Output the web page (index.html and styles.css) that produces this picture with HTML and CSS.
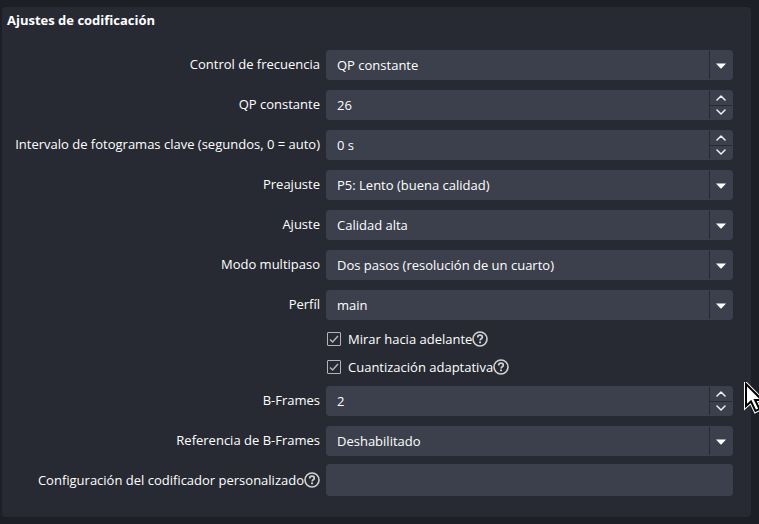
FILE: index.html
```html
<!DOCTYPE html>
<html lang="es">
<head>
    <meta charset="UTF-8">
    <meta name="viewport" content="width=device-width, initial-scale=1.0">
    <title>Ajustes de codificación</title>
    <link rel="stylesheet" href="styles.css">
</head>
<body>
    <!-- Iconos compartidos -->
    <svg class="sprite" aria-hidden="true">
        <symbol id="icon-arrow" viewBox="0 0 10 6">
            <path d="M0 0.500h10L5.600 5.200q-.6.6-1.200 0z" fill="#fff"/>
        </symbol>
        <symbol id="icon-up" viewBox="0 0 10 6">
            <path d="M1 5l4-4 4 4" fill="none" stroke="#f0f0f2" stroke-width="1.5" stroke-linecap="round" stroke-linejoin="round"/>
        </symbol>
        <symbol id="icon-down" viewBox="0 0 10 6">
            <path d="M1 1l4 4 4-4" fill="none" stroke="#f0f0f2" stroke-width="1.5" stroke-linecap="round" stroke-linejoin="round"/>
        </symbol>
        <symbol id="icon-help" viewBox="0 0 16 16">
            <circle cx="8" cy="8" r="7" fill="none" stroke="#d2d2d4" stroke-width="1.6"/>
            <path d="M5.700 6.400c0-1.400 1-2.200 2.300-2.200s2.300.8 2.300 2c0 1.600-2.200 1.600-2.200 3.300" fill="none" stroke="#d2d2d4" stroke-width="1.7"/>
            <path d="M7.100 10.500h1.900v1.800H7.100z" fill="#d2d2d4"/>
        </symbol>
    </svg>

    <main class="panel">
        <h1>Ajustes de codificación</h1>
        <form class="settings">
            <label for="rate-control">Control de frecuencia</label>
            <div class="field">
                <select id="rate-control"><option>QP constante</option></select>
                <svg class="arrow"><use href="#icon-arrow"/></svg>
            </div>

            <label for="cqp">QP constante</label>
            <div class="field spin">
                <input type="text" id="cqp" value="26">
                <div class="steps">
                    <button type="button" aria-label="Aumentar"><svg><use href="#icon-up"/></svg></button>
                    <button type="button" aria-label="Disminuir"><svg><use href="#icon-down"/></svg></button>
                </div>
            </div>

            <label for="keyint">Intervalo de fotogramas clave (segundos, 0 = auto)</label>
            <div class="field spin">
                <input type="text" id="keyint" value="0 s">
                <div class="steps">
                    <button type="button" aria-label="Aumentar"><svg><use href="#icon-up"/></svg></button>
                    <button type="button" aria-label="Disminuir"><svg><use href="#icon-down"/></svg></button>
                </div>
            </div>

            <label for="preset">Preajuste</label>
            <div class="field">
                <select id="preset"><option>P5: Lento (buena calidad)</option></select>
                <svg class="arrow"><use href="#icon-arrow"/></svg>
            </div>

            <label for="tune">Ajuste</label>
            <div class="field">
                <select id="tune"><option>Calidad alta</option></select>
                <svg class="arrow"><use href="#icon-arrow"/></svg>
            </div>

            <label for="multipass">Modo multipaso</label>
            <div class="field">
                <select id="multipass"><option>Dos pasos (resolución de un cuarto)</option></select>
                <svg class="arrow"><use href="#icon-arrow"/></svg>
            </div>

            <label for="profile">Perfíl</label>
            <div class="field">
                <select id="profile"><option>main</option></select>
                <svg class="arrow"><use href="#icon-arrow"/></svg>
            </div>

            <div class="checks">
                <label class="check"><input type="checkbox" checked>Mirar hacia adelante<svg class="help"><use href="#icon-help"/></svg></label>
                <label class="check"><input type="checkbox" checked>Cuantización adaptativa<svg class="help"><use href="#icon-help"/></svg></label>
            </div>

            <label for="bframes">B-Frames</label>
            <div class="field spin">
                <input type="text" id="bframes" value="2">
                <div class="steps">
                    <button type="button" aria-label="Aumentar"><svg><use href="#icon-up"/></svg></button>
                    <button type="button" aria-label="Disminuir"><svg><use href="#icon-down"/></svg></button>
                </div>
            </div>

            <label for="bref">Referencia de B-Frames</label>
            <div class="field">
                <select id="bref"><option>Deshabilitado</option></select>
                <svg class="arrow"><use href="#icon-arrow"/></svg>
            </div>

            <label for="custom">Configuración del codificador personalizado<svg class="help"><use href="#icon-help"/></svg></label>
            <div class="field text">
                <input type="text" id="custom">
            </div>
        </form>
    </main>

    <!-- Puntero del ratón -->
    <svg class="cursor" viewBox="0 0 22 34" aria-hidden="true">
        <path d="M2 2v22l5-4.500 4.500 9.500 4-2-4.500-9H18z" fill="#fff" stroke="#fff" stroke-width="4"/>
        <path d="M2 2v22l5-4.500 4.500 9.500 4-2-4.500-9H18z" fill="#fff" stroke="#000" stroke-width="2"/>
    </svg>
</body>
</html>
```

FILE: styles.css
```css
* {
    margin: 0;
    padding: 0;
    box-sizing: border-box;
}

body {
    background-color: #1d1f26;
    color: #fff;
    font-family: 'Open Sans', 'Noto Sans', sans-serif;
    font-size: 13px;
    line-height: 18px;
    padding: 7px 8px 7px 2px;
    min-height: 100vh;
    position: relative;
    overflow: hidden;
}

.sprite {
    display: none;
}

.panel {
    background-color: #272a33;
    border-radius: 4px;
    padding: 4px 18px 21px 5px;
}

h1 {
    font-size: 13px;
    font-weight: bold;
    margin-bottom: 21px;
}

/* Formulario */
.settings {
    display: grid;
    grid-template-columns: 313px 1fr;
    gap: 10px 6px;
}

.settings > label {
    display: flex;
    align-items: center;
    justify-content: flex-end;
    padding-bottom: 2px;
    white-space: nowrap;
}

.field {
    display: flex;
    height: 30px;
    position: relative;
    background-color: #3c404d;
    border-radius: 4px;
}

.field.text {
    height: 32px;
    margin-top: -2px;
}

.field input,
.field select {
    flex: 1;
    min-width: 0;
    border: none;
    outline: none;
    background: none;
    color: #fff;
    font: inherit;
    padding: 0 11px;
}

.field select {
    appearance: none;
    background: linear-gradient(#272a33, #272a33) no-repeat right 23px center / 1px 28px;
}

.arrow {
    position: absolute;
    right: 7px;
    top: 13px;
    width: 10px;
    height: 6px;
    pointer-events: none;
}

/* Botones de subir y bajar */
.steps {
    display: flex;
    flex-direction: column;
    width: 24px;
    margin: 1px 0;
    padding-right: 1px;
    border-left: 1px solid #272a33;
}

.steps button {
    display: flex;
    flex: 1;
    align-items: center;
    justify-content: center;
    border: none;
    background: none;
    cursor: pointer;
}

.steps button + button {
    border-top: 1px solid #272a33;
}

.steps svg {
    width: 10px;
    height: 6px;
}

/* Casillas */
.checks {
    grid-column: 2;
    display: flex;
    flex-direction: column;
    align-items: flex-start;
    gap: 10px;
}

.check {
    display: flex;
    align-items: center;
}

.check input {
    appearance: none;
    width: 14px;
    height: 14px;
    margin: 0 7px 0 1px;
    border: 1px solid #b4b5b9;
    border-radius: 1px;
}

.check input:checked {
    background: url("data:image/svg+xml,%3Csvg xmlns='http://www.w3.org/2000/svg' viewBox='0 0 12 12'%3E%3Cpath d='M2 6.500l2.600 2.500L10 3' fill='none' stroke='%23b4b5b9' stroke-width='1.500'/%3E%3C/svg%3E") center / 12px 12px no-repeat;
}

.help {
    width: 16px;
    height: 16px;
    flex: none;
}

.cursor {
    position: absolute;
    left: 744px;
    top: 382px;
    width: 22px;
    height: 34px;
}
```
